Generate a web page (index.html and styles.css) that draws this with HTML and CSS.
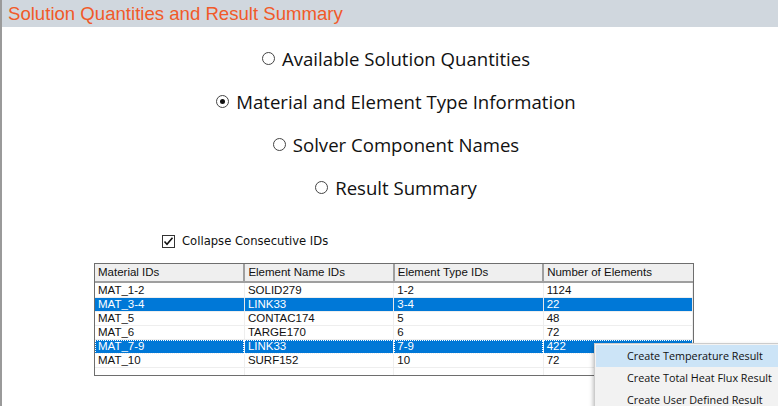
FILE: index.html
```html
<!DOCTYPE html>
<html lang="en">
<head>
  <meta charset="UTF-8" />
  <title>Solution Quantities and Result Summary</title>
  <link rel="stylesheet" href="styles.css">
</head>
<body>
  <div class="panel">
    <div class="title-bar">Solution Quantities and Result Summary</div>

    <div class="options">
      <label class="option"><span class="radio"></span>Available Solution Quantities</label>
      <label class="option"><span class="radio checked"></span>Material and Element Type Information</label>
      <label class="option"><span class="radio"></span>Solver Component Names</label>
      <label class="option"><span class="radio"></span>Result Summary</label>
    </div>

    <div class="collapse-row">
      <span class="checkbox">
        <svg width="11" height="11" viewBox="0 0 11 11"><path d="M1.5 5.5 L4 8.2 L9.5 1.8" fill="none" stroke="#111" stroke-width="1.6"/></svg>
      </span>
      Collapse Consecutive IDs
    </div>

    <div class="table-wrap">
      <table class="grid">
        <thead>
          <tr>
            <th>Material IDs</th>
            <th>Element Name IDs</th>
            <th>Element Type IDs</th>
            <th>Number of Elements</th>
          </tr>
        </thead>
        <tbody>
          <tr><td>MAT_1-2</td><td>SOLID279</td><td>1-2</td><td>1124</td></tr>
          <tr class="selected"><td>MAT_3-4</td><td>LINK33</td><td>3-4</td><td>22</td></tr>
          <tr><td>MAT_5</td><td>CONTAC174</td><td>5</td><td>48</td></tr>
          <tr><td>MAT_6</td><td>TARGE170</td><td>6</td><td>72</td></tr>
          <tr class="selected focused"><td>MAT_7-9</td><td>LINK33</td><td>7-9</td><td>422</td></tr>
          <tr><td>MAT_10</td><td>SURF152</td><td>10</td><td>72</td></tr>
          <tr class="empty"><td></td><td></td><td></td><td></td></tr>
        </tbody>
      </table>
    </div>
  </div>

  <div class="context-menu">
    <div class="menu-item hover">Create Temperature Result</div>
    <div class="menu-item">Create Total Heat Flux Result</div>
    <div class="menu-item">Create User Defined Result</div>
  </div>
</body>
</html>
```

FILE: styles.css
```css
body {
  margin: 0;
  padding: 0;
  background: #fff;
  font-family: "DejaVu Sans", Tahoma, sans-serif;
  overflow: hidden;
}
.panel {
  height: 406px;
  border-left: 2px solid #9a9a9a;
  box-sizing: border-box;
}
.title-bar {
  height: 27px;
  background-color: #d0d7de;
  color: #f15a29;
  font-family: "Liberation Sans", Arial, sans-serif;
  font-size: 18.6px;
  line-height: 27px;
  padding-left: 6px;
  white-space: nowrap;
}
.options {
  display: flex;
  flex-direction: column;
  align-items: center;
  gap: 18px;
  padding-top: 19px;
  padding-left: 12px;
  font-family: "Open Sans", "Noto Sans", sans-serif;
  font-size: 18.6px;
  color: #111;
}
.option {
  display: flex;
  align-items: center;
  height: 25px;
  white-space: nowrap;
}
.radio {
  width: 11px;
  height: 11px;
  border: 1px solid #444;
  border-radius: 50%;
  margin-right: 7px;
  position: relative;
  box-sizing: content-box;
}
.radio.checked::after {
  content: "";
  position: absolute;
  left: 3px;
  top: 3px;
  width: 5px;
  height: 5px;
  border-radius: 50%;
  background: #111;
}
.collapse-row {
  display: flex;
  align-items: center;
  margin: 33px 0 0 160px;
  font-size: 11.6px;
  color: #111;
  height: 16px;
}
.checkbox {
  width: 11px;
  height: 11px;
  border: 1px solid #333;
  margin-right: 7px;
  display: flex;
  align-items: center;
  justify-content: center;
}
.table-wrap {
  margin: 14px 0 0 92px;
  width: 600px;
  height: 113px;
  border: 1px solid #6e6e6e;
  box-sizing: border-box;
  overflow: hidden;
}
.grid {
  width: 100%;
  border-collapse: collapse;
  table-layout: fixed;
  font-family: "Liberation Sans", Arial, sans-serif;
  font-size: 11.5px;
  color: #111;
}
.grid th {
  background: #efefef;
  font-weight: normal;
  text-align: left;
  height: 17px;
  line-height: 17px;
  padding: 0 3px;
  border-right: 2px solid #9f9f9f;
  border-bottom: 2px solid #9f9f9f;
  white-space: nowrap;
}
.grid th:last-child {
  border-right: none;
}
.grid td {
  height: 13px;
  line-height: 13px;
  padding: 0 3px;
  border-right: 1px solid #eeeeee;
  border-bottom: 1px solid #eeeeee;
  white-space: nowrap;
}
.grid tbody tr:first-child td {
  padding-top: 1px;
}
.grid tr.selected td {
  background: #0078d7;
  color: #fff;
  border-right-color: #e8e8e8;
}
.grid tr.focused td {
  outline: 1px dotted #ffffff;
  outline-offset: -1px;
}
.context-menu {
  position: absolute;
  left: 594px;
  top: 343px;
  width: 200px;
  background: #f2f2f2;
  border: 1px solid #cccccc;
  box-shadow: -1px 2px 4px rgba(0, 0, 0, 0.25);
  padding: 1px;
  font-family: "Open Sans", "Noto Sans", sans-serif;
  font-size: 10.8px;
  color: #111;
}
.menu-item {
  height: 22px;
  line-height: 22px;
  padding-left: 31px;
  white-space: nowrap;
}
.menu-item.hover {
  background: #cce4f7;
}
```
